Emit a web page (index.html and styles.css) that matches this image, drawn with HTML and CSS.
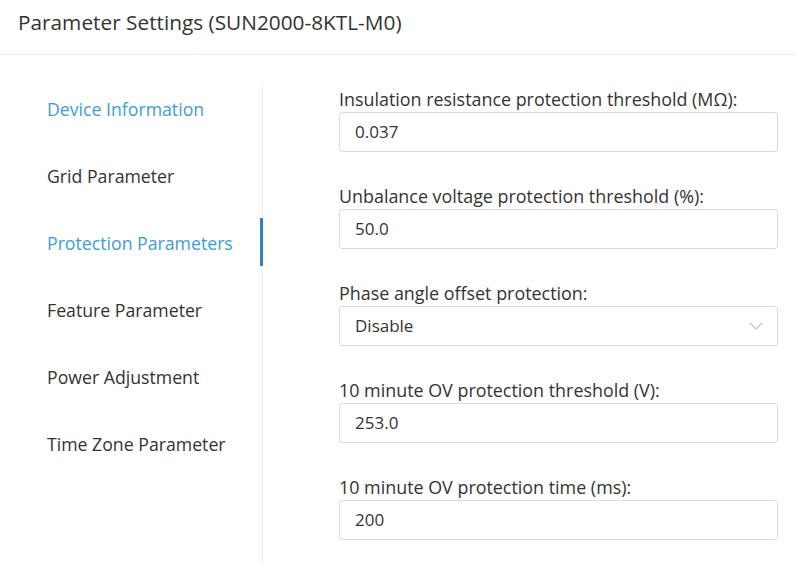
FILE: index.html
```html
<!DOCTYPE html>
<html>
<head>
<meta charset="utf-8">
<link rel="stylesheet" href="styles.css">
</head>
<body>
<div class="page">
  <header class="header">Parameter Settings (SUN2000-8KTL-M0)</header>
  <div class="body">
    <nav class="sidebar">
      <div class="nav-item active-blue">Device Information</div>
      <div class="nav-item">Grid Parameter</div>
      <div class="nav-item active">Protection Parameters</div>
      <div class="nav-item">Feature Parameter</div>
      <div class="nav-item">Power Adjustment</div>
      <div class="nav-item">Time Zone Parameter</div>
    </nav>
    <main class="panel">
      <div class="field">
        <label class="label">Insulation resistance protection threshold (MΩ):</label>
        <div class="input">0.037</div>
      </div>
      <div class="field">
        <label class="label">Unbalance voltage protection threshold (%):</label>
        <div class="input">50.0</div>
      </div>
      <div class="field">
        <label class="label">Phase angle offset protection:</label>
        <div class="input select">
          <span>Disable</span>
          <svg class="chev" width="14" height="8" viewBox="0 0 14 8"><path d="M1 1 L7 7 L13 1" fill="none" stroke="#c4c4c4" stroke-width="1.2"/></svg>
        </div>
      </div>
      <div class="field">
        <label class="label">10 minute OV protection threshold (V):</label>
        <div class="input">253.0</div>
      </div>
      <div class="field">
        <label class="label">10 minute OV protection time (ms):</label>
        <div class="input">200</div>
      </div>
    </main>
  </div>
</div>
</body>
</html>
```
FILE: styles.css
```css
* { box-sizing: border-box; }
html, body { margin: 0; padding: 0; background: #fff; }
body {
  font-family: "Open Sans", "Noto Sans", sans-serif;
  color: #333;
  width: 795px;
  height: 566px;
  overflow: hidden;
}
.header {
  height: 55px;
  line-height: 44px;
  padding-left: 18px;
  font-size: 20.8px;
  color: #333;
  border-bottom: 1px solid #ececec;
}
.body {
  display: flex;
  height: 511px;
}
.sidebar {
  width: 263px;
  margin-top: 29px;
  border-right: 1px solid #efefef;
  display: flex;
  flex-direction: column;
  gap: 19px;
}
.nav-item {
  height: 48px;
  line-height: 50px;
  padding-left: 47px;
  font-size: 17.7px;
  color: #333;
  margin-right: -1px;
}
.nav-item.active-blue { color: #3d9dd4; }
.nav-item.active { color: #3d9dd4; border-right: 3px solid #2b84ba; }
.panel {
  flex: 1;
  padding: 32px 17px 0 76px;
  display: flex;
  flex-direction: column;
  gap: 32px;
}
.field { display: flex; flex-direction: column; gap: 1px; }
.label {
  font-size: 17.9px;
  line-height: 24px;
  color: #333;
  white-space: nowrap;
}
.input {
  height: 40px;
  border: 1px solid #dcdcdc;
  border-radius: 3px;
  padding: 0 15px;
  line-height: 38px;
  font-size: 17px;
  color: #333;
}
.select {
  display: flex;
  align-items: center;
  justify-content: space-between;
}
.chev { margin-right: -1px; }
```
